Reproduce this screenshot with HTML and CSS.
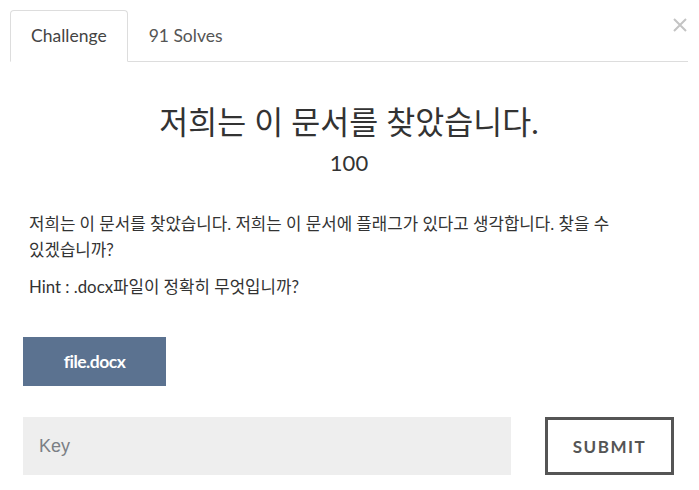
FILE: index.html
```html
<!DOCTYPE html>
<html lang="ko">
<head>
<meta charset="utf-8">
<title>Challenge</title>
<link rel="stylesheet" href="styles.css">
</head>
<body>
<div class="modal">
  <button class="close" aria-label="Close">
    <svg width="14" height="14" viewBox="0 0 14 14"><path d="M1 1L13 13M13 1L1 13" stroke="#c4c4c4" stroke-width="2" fill="none"/></svg>
  </button>
  <ul class="tabs">
    <li class="tab active">Challenge</li>
    <li class="tab">91 Solves</li>
  </ul>
  <div class="pane">
    <h3 class="title">저희는 이 문서를 찾았습니다.</h3>
    <h4 class="value">100</h4>
    <div class="desc">
      <p>저희는 이 문서를 찾았습니다. 저희는 이 문서에 플래그가 있다고 생각합니다. 찾을 수 있겠습니까?</p>
      <p>Hint : .docx파일이 정확히 무엇입니까?</p>
    </div>
    <div class="files">
      <a class="file-btn">file.docx</a>
    </div>
    <div class="submit-row">
      <input class="key" type="text" placeholder="Key">
      <button class="submit">SUBMIT</button>
    </div>
  </div>
</div>
</body>
</html>
```

FILE: styles.css
```css
* { box-sizing: border-box; }
html, body { margin: 0; padding: 0; background: #fff; }
body {
  font-family: Lato, "Noto Sans CJK KR", sans-serif;
  color: #333;
  width: 699px;
  height: 490px;
  overflow: hidden;
}
.modal {
  position: relative;
  padding: 10px 11px 0 10px;
}
.close {
  position: absolute;
  top: 18px;
  right: 12px;
  padding: 0;
  border: 0;
  background: none;
  line-height: 0;
}
.tabs {
  list-style: none;
  margin: 0;
  padding: 0;
  display: flex;
  border-bottom: 1px solid #dddddd;
}
.tab {
  font-size: 17.5px;
  line-height: 22px;
  padding: 14px 20px 14px 20px;
  margin-bottom: -1px;
  border: 1px solid transparent;
  border-radius: 4px 4px 0 0;
  color: #555;
}
.tab.active {
  border-color: #dddddd #dddddd #fff;
  background: #fff;
  color: #444;
}
.pane {
  padding: 0;
}
.title {
  margin: 40px 0 0;
  text-align: center;
  font-size: 31.5px;
  font-weight: 400;
  line-height: 40px;
  color: #333;
}
.value {
  margin: 7px 0 0;
  text-align: center;
  font-size: 22px;
  font-weight: 400;
  line-height: 28px;
  color: #333;
}
.desc {
  margin-top: 34px;
  padding: 0 14px 0 19px;
  font-size: 16.8px;
  line-height: 26px;
  word-break: keep-all;
}
.desc p { margin: 0 0 11px; }
.files {
  margin-top: 37px;
  padding-left: 13px;
}
.file-btn {
  display: inline-flex;
  align-items: center;
  justify-content: center;
  width: 143px;
  height: 49px;
  background: #5b7290;
  color: #fff;
  font-weight: 700;
  font-size: 17.5px;
  letter-spacing: -0.5px;
}
.submit-row {
  display: flex;
  align-items: stretch;
  margin-top: 31px;
  padding-left: 13px;
  gap: 34px;
}
.key {
  width: 488px;
  height: 58px;
  border: 0;
  background: #eeeeee;
  padding: 0 16px;
  font-family: "Liberation Sans", Arial, sans-serif;
  font-size: 18px;
  outline: none;
}
.key::placeholder { color: #7b7f85; }
.submit {
  width: 129px;
  height: 58px;
  background: #fff;
  border: 3px solid #555;
  font-family: Lato, sans-serif;
  font-weight: 700;
  font-size: 17px;
  letter-spacing: 1.5px;
  color: #555;
  padding: 0;
}
```
